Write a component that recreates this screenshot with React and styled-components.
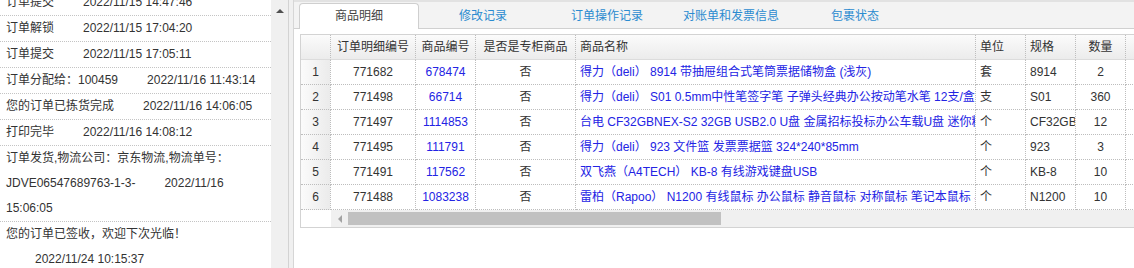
import React from 'react';
import styled, { createGlobalStyle } from 'styled-components';

const GlobalStyle = createGlobalStyle`
  html, body {
    margin: 0;
    padding: 0;
    background: #fff;
  }
  body {
    font-family: "Liberation Sans", "Noto Sans CJK SC", sans-serif;
    font-size: 12px;
    color: #333;
  }
`;

const logs = [
  { text: '订单提交', time: '2022/11/15 14:47:46' },
  { text: '订单解锁', time: '2022/11/15 17:04:20' },
  { text: '订单提交', time: '2022/11/15 17:05:11' },
  { text: '订单分配给：100459', time: '2022/11/16 11:43:14' },
  { text: '您的订单已拣货完成', time: '2022/11/16 14:06:05' },
  { text: '打印完毕', time: '2022/11/16 14:08:12' },
  { text: '订单发货,物流公司：京东物流,物流单号：JDVE06547689763-1-3-', time: '2022/11/16 15:06:05' },
  { text: '您的订单已签收，欢迎下次光临！', time: '2022/11/24 10:15:37' }
];

const tabs = ['商品明细', '修改记录', '订单操作记录', '对账单和发票信息', '包裹状态'];

const items = [
  { id: '771682', sku: '678474', name: '得力（deli） 8914 带抽屉组合式笔筒票据储物盒 (浅灰)', unit: '套', spec: '8914', qty: '2' },
  { id: '771498', sku: '66714', name: '得力（deli） S01 0.5mm中性笔签字笔 子弹头经典办公按动笔水笔 12支/盒 黑色', unit: '支', spec: 'S01', qty: '360' },
  { id: '771497', sku: '1114853', name: '台电 CF32GBNEX-S2 32GB USB2.0 U盘 金属招标投标办公车载U盘 迷你精致', unit: '个', spec: 'CF32GBNEX-S2', qty: '12' },
  { id: '771495', sku: '111791', name: '得力（deli） 923 文件篮 发票票据篮 324*240*85mm', unit: '个', spec: '923', qty: '3' },
  { id: '771491', sku: '117562', name: '双飞燕（A4TECH） KB-8 有线游戏键盘USB', unit: '个', spec: 'KB-8', qty: '10' },
  { id: '771488', sku: '1083238', name: '雷柏（Rapoo） N1200 有线鼠标 办公鼠标 静音鼠标 对称鼠标 笔记本鼠标 黑色', unit: '个', spec: 'N1200', qty: '10' }
];

const COLS = '30px 85px 60px 100px 400px 50px 50px 50px 1fr';

class App extends React.Component {
  render() {
    return (
      <Page>
        <GlobalStyle />
        <LogPanel>
          <LogList>
            {logs.map((log, i) => (
              <LogItem key={i} last={i === logs.length - 1}>
                {log.text}<LogTime>{log.time}</LogTime>
              </LogItem>
            ))}
          </LogList>
          <VScroll>
            <UpArrow />
          </VScroll>
        </LogPanel>

        <DetailPanel>
          <TabBar>
            {tabs.map((t, i) => (
              <Tab key={t} active={i === 0}>{t}</Tab>
            ))}
          </TabBar>
          <TabBody>
            <Grid>
              <HeadRow>
                <HeadCell />
                <HeadCell>订单明细编号</HeadCell>
                <HeadCell>商品编号</HeadCell>
                <HeadCell>是否是专柜商品</HeadCell>
                <HeadCell align="left">商品名称</HeadCell>
                <HeadCell align="left">单位</HeadCell>
                <HeadCell align="left">规格</HeadCell>
                <HeadCell>数量</HeadCell>
                <HeadCell />
              </HeadRow>
              {items.map((it, i) => (
                <Row key={it.id}>
                  <NumCell>{i + 1}</NumCell>
                  <Cell>{it.id}</Cell>
                  <Cell link>{it.sku}</Cell>
                  <Cell>否</Cell>
                  <Cell align="left" link>{it.name}</Cell>
                  <Cell align="left">{it.unit}</Cell>
                  <Cell align="left">{it.spec}</Cell>
                  <Cell>{it.qty}</Cell>
                  <Cell />
                </Row>
              ))}
              <ScrollRow>
                <ScrollCorner />
                <HTrack>
                  <LeftArrowBtn>
                    <LeftArrow />
                  </LeftArrowBtn>
                  <HThumb />
                </HTrack>
              </ScrollRow>
            </Grid>
          </TabBody>
        </DetailPanel>
      </Page>
    );
  }
}

const Page = styled.div`
  display: flex;
  width: 100vw;
  height: 268px;
  overflow: hidden;
  background: #f0f0f0;
`;

const LogPanel = styled.div`
  flex: none;
  display: flex;
  width: 288px;
  height: 100%;
  border-right: 1px solid #d3d3d3;
  margin-right: 4px;
  background: #fff;
  overflow: hidden;
`;

const LogList = styled.ul`
  list-style: none;
  margin: -10px 0 0;
  padding: 0;
  width: 271px;
  flex: none;
`;

const LogItem = styled.li`
  padding: 0 6px;
  line-height: 25px;
  border-bottom: ${p => (p.last ? 'none' : '1px dotted #c4c4c4')};
  color: #333;
`;

const LogTime = styled.span`
  margin-left: 29px;
`;

const VScroll = styled.div`
  flex: 1;
  background: #f0f0f0;
  display: flex;
  justify-content: center;
  padding-top: 9px;
  box-sizing: border-box;
`;

const UpArrow = styled.div`
  width: 0;
  height: 0;
  border-left: 4px solid transparent;
  border-right: 4px solid transparent;
  border-bottom: 4px solid #505050;
`;

const DetailPanel = styled.div`
  flex: none;
  width: 1000px;
  height: 100%;
  border-left: 1px solid #d6d6d6;
  background: #fff;
  display: flex;
  flex-direction: column;
`;

const TabBar = styled.div`
  display: flex;
  align-items: flex-end;
  gap: 4px;
  height: 25px;
  padding: 1px 0 0 5px;
  border-top: 2px solid #e2e2e2;
  border-bottom: 1px solid #d0d0d0;
  background: #f3f3f3;
`;

const Tab = styled.div`
  flex: none;
  width: 120px;
  height: 26px;
  line-height: 25px;
  margin-bottom: -1px;
  box-sizing: border-box;
  text-align: center;
  color: ${p => (p.active ? '#444' : '#2b8bd0')};
  background: ${p => (p.active ? '#fff' : 'transparent')};
  border: 1px solid ${p => (p.active ? '#cfcfcf' : 'transparent')};
  border-bottom: none;
  border-radius: 4px 4px 0 0;
`;

const TabBody = styled.div`
  padding: 5px 6px;
  background: #fff;
`;

const Grid = styled.div`
  border: 1px solid #d3d3d3;
  background: #fff;
`;

const Row = styled.div`
  display: grid;
  grid-template-columns: ${COLS};
  height: 25px;
`;

const HeadRow = styled(Row)`
  background: linear-gradient(#fbfbfb, #ebebeb);
`;

const HeadCell = styled.div`
  box-sizing: border-box;
  height: 25px;
  line-height: 24px;
  padding: 0 4px;
  text-align: ${p => p.align || 'center'};
  border-right: 1px dotted #bdbdbd;
  border-bottom: 1px solid #dcdcdc;
  color: #333;
  white-space: nowrap;
  overflow: hidden;
`;

const Cell = styled.div`
  box-sizing: border-box;
  height: 25px;
  line-height: 24px;
  padding: 0 4px;
  text-align: ${p => p.align || 'center'};
  border-right: 1px dotted #bdbdbd;
  border-bottom: 1px dotted #bdbdbd;
  color: ${p => (p.link ? '#2323e4' : '#333')};
  white-space: nowrap;
  overflow: hidden;
`;

const NumCell = styled(Cell)`
  background: linear-gradient(to right, #fbfbfb, #ebebeb);
`;

const ScrollRow = styled.div`
  display: grid;
  grid-template-columns: 30px 1fr;
  height: 17px;
`;

const ScrollCorner = styled.div`
  background: #fff;
`;

const HTrack = styled.div`
  display: flex;
  align-items: center;
  background: #f0f0f0;
`;

const LeftArrowBtn = styled.div`
  flex: none;
  width: 17px;
  height: 17px;
  display: flex;
  align-items: center;
  justify-content: center;
`;

const LeftArrow = styled.div`
  width: 0;
  height: 0;
  border-top: 4px solid transparent;
  border-bottom: 4px solid transparent;
  border-right: 4px solid #a3a3a3;
`;

const HThumb = styled.div`
  flex: none;
  width: 373px;
  height: 13px;
  background: #c1c1c1;
`;

export default App;
